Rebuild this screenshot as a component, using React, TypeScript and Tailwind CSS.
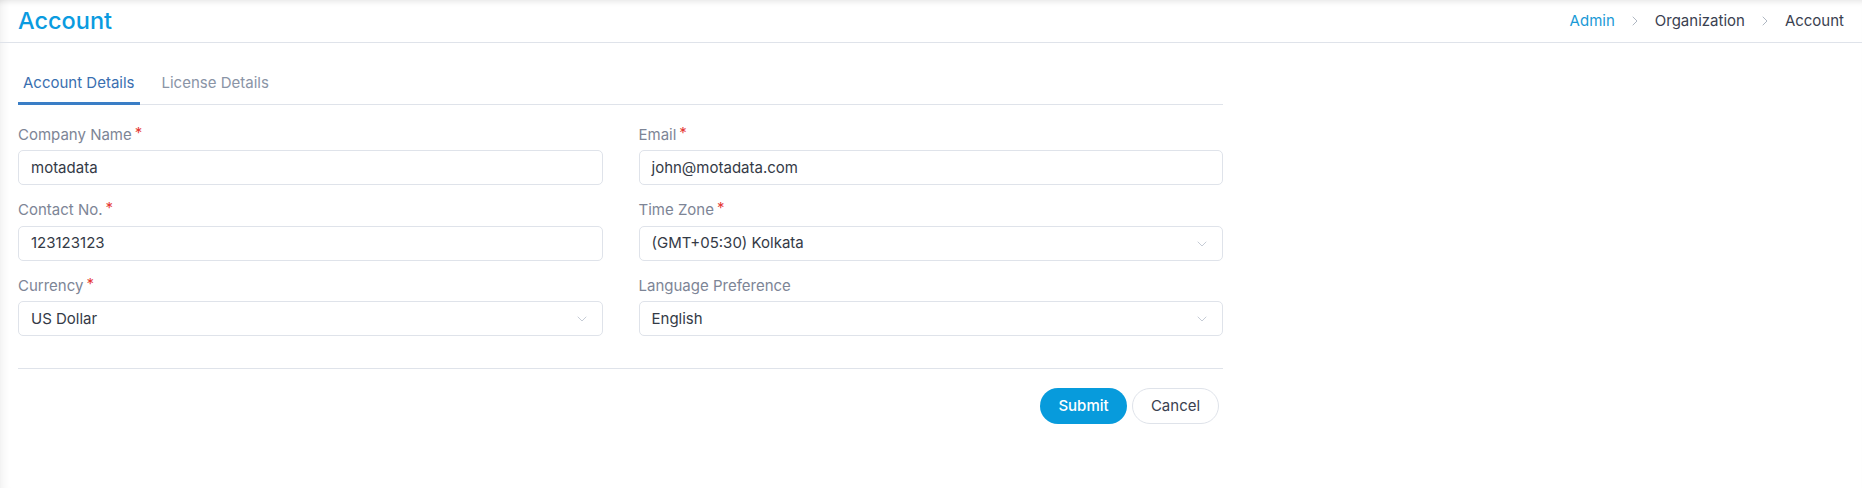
import { ChevronDown, ChevronRight } from 'lucide-react';

const font = { fontFamily: 'Inter, "Open Sans", sans-serif' };

type Field = { label: string; value: string; required?: boolean; select?: boolean };

const fields: Field[] = [
  { label: 'Company Name', value: 'motadata', required: true },
  { label: 'Email', value: 'john@motadata.com', required: true },
  { label: 'Contact No.', value: '123123123', required: true },
  { label: 'Time Zone', value: '(GMT+05:30) Kolkata', required: true, select: true },
  { label: 'Currency', value: 'US Dollar', required: true, select: true },
  { label: 'Language Preference', value: 'English', select: true },
];

function FormField({ field }: { field: Field }) {
  return (
    <div className="flex flex-col">
      <label className="mb-[5px] mt-[2px] flex h-5 items-center text-[15px] text-[#7d8596]">
        {field.label}
        {field.required && (
          <span className="ml-[3px] -mt-[6px] text-[15px] leading-none text-[#e53935]">*</span>
        )}
      </label>
      <div className="flex h-[35px] items-center justify-between rounded-[5px] border border-[#dfe3ea] bg-white pl-3 pr-3 pt-px">
        <span className="text-[15px] text-[#343a46]">{field.value}</span>
        {field.select && <ChevronDown className="h-[16px] w-[16px] text-[#b7bfcc]" strokeWidth={1.2} />}
      </div>
    </div>
  );
}

export default function App() {
  return (
    <div
      style={font}
      className="relative h-[488px] w-full bg-white shadow-[inset_10px_0_10px_-8px_rgba(0,0,0,0.07),inset_0_6px_6px_-5px_rgba(0,0,0,0.12)]"
    >
      {/* Page header: title on the left, breadcrumb trail on the right */}
      <div className="flex h-[43px] items-center justify-between border-b border-[#dfe3ea] pl-[18px] pr-[18px]">
        <h1 className="text-[23.5px] font-medium text-[#0a9be0]">Account</h1>
        <nav className="flex items-center gap-[12px] text-[15px]">
          <span className="text-[#1a9ad6]">Admin</span>
          <ChevronRight className="h-[16px] w-[16px] text-[#9aa4b2]" strokeWidth={1.2} />
          <span className="text-[#3a4150]">Organization</span>
          <ChevronRight className="h-[16px] w-[16px] text-[#9aa4b2]" strokeWidth={1.2} />
          <span className="text-[#3a4150]">Account</span>
        </nav>
      </div>

      <div className="ml-[18px] w-[1205px]">
        {/* Tabs */}
        <div className="mt-[20px] flex gap-[17px] border-b border-[#dfe3ea]">
          <div className="-mb-px flex h-[42px] items-center border-b-[3px] border-[#3a7ec6] px-[5px] pt-px text-[15px] text-[#3a6fb0]">
            Account Details
          </div>
          <div className="-mb-px flex h-[42px] items-center border-b-[3px] border-transparent px-[5px] pt-px text-[15px] text-[#8a94a6]">
            License Details
          </div>
        </div>

        {/* Form fields in two columns */}
        <div className="mt-[18px] grid grid-cols-2 gap-x-[36px] gap-y-[13.5px]">
          {fields.map((f) => (
            <FormField key={f.label} field={f} />
          ))}
        </div>

        <div className="mt-[32px] border-t border-[#dfe3ea]" />

        <div className="mt-[19px] flex justify-end gap-[5px] pr-[4px]">
          <button className="h-[36px] w-[87px] rounded-full bg-[#079bdc] text-[15px] font-medium text-white">
            Submit
          </button>
          <button className="h-[36px] w-[87px] rounded-full border border-[#dfe3ea] bg-white text-[15px] text-[#3a4150]">
            Cancel
          </button>
        </div>
      </div>
    </div>
  );
}
